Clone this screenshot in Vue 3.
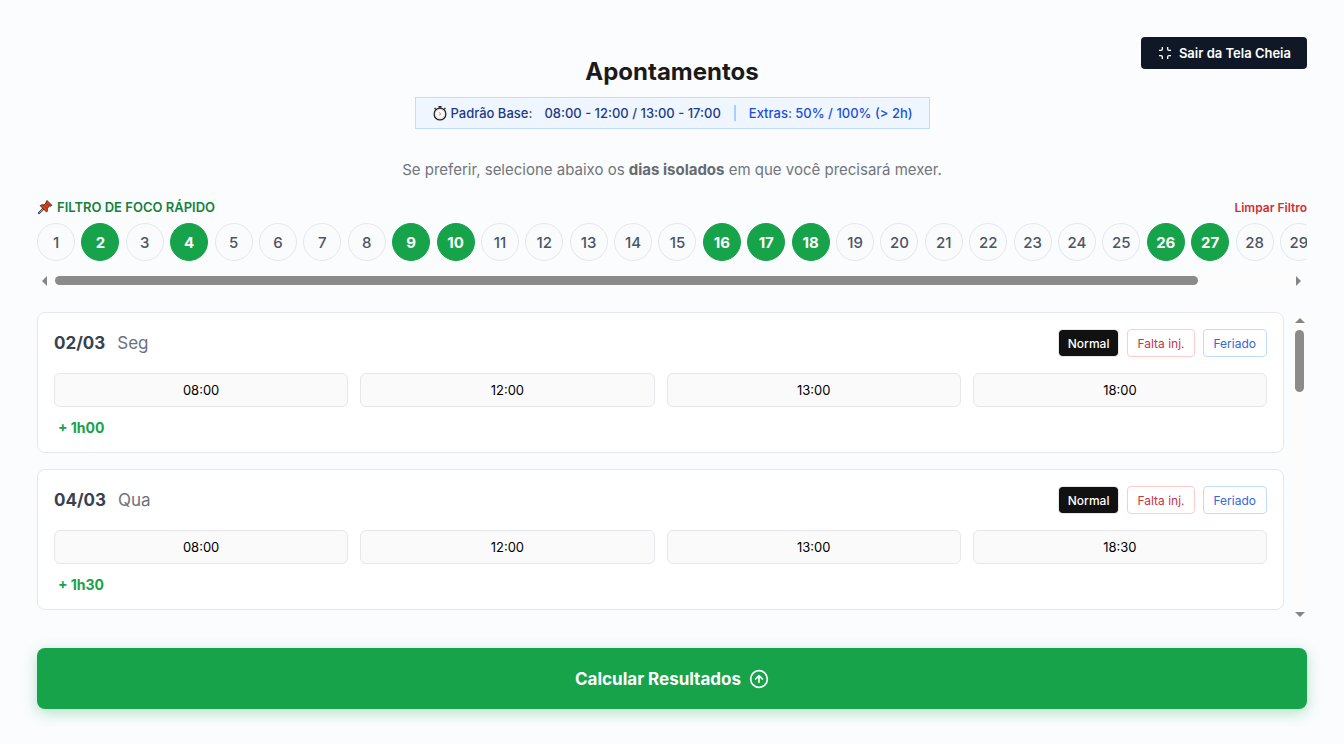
<script setup>
import { ref } from 'vue'

const totalDays = 31
const selected = ref([2, 4, 9, 10, 16, 17, 18, 26, 27])

const toggle = (day) => {
  selected.value = selected.value.includes(day)
    ? selected.value.filter((d) => d !== day)
    : [...selected.value, day]
}

const entries = ref([
  { date: '02/03', weekday: 'Seg', times: ['08:00', '12:00', '13:00', '18:00'], result: '+ 1h00' },
  { date: '04/03', weekday: 'Qua', times: ['08:00', '12:00', '13:00', '18:30'], result: '+ 1h30' },
])

const fieldNames = ['Entrada', 'Saída para almoço', 'Retorno do almoço', 'Saída']
</script>

<template>
  <main class="page">
    <button type="button" class="exit">
      <svg class="exit-icon" viewBox="0 0 24 24" aria-hidden="true">
        <path d="M8 3v3a2 2 0 0 1-2 2H3M21 8h-3a2 2 0 0 1-2-2V3M3 16h3a2 2 0 0 1 2 2v3M16 21v-3a2 2 0 0 1 2-2h3" />
      </svg>
      <span>Sair da Tela Cheia</span>
    </button>

    <header class="header">
      <h1 class="title">Apontamentos</h1>
      <div class="base">
        <span class="base-label">
          <svg class="watch" viewBox="0 0 16 16" aria-hidden="true">
            <path d="M6.4 1.6h3.200M8 1.600v1.800M12.400 3l1 1M3.600 3l-1 1" fill="none" stroke="#222" stroke-width="1.4" />
            <circle cx="8" cy="9" r="5.9" fill="#fafafa" stroke="#222" stroke-width="1.3" />
            <circle cx="8" cy="9" r="4.7" fill="none" stroke="#c9ccd1" stroke-width=".7" />
            <path d="M6.8 7.2L8.9 9 7 10.4" fill="none" stroke="#e06a62" stroke-width=".8" />
          </svg>
          Padrão Base:
        </span>
        <span class="base-hours">08:00 - 12:00 / 13:00 - 17:00</span>
        <span class="divider"></span>
        <span class="base-extras">Extras: 50% / 100% (&gt; 2h)</span>
      </div>
      <p class="hint">Se preferir, selecione abaixo os <strong>dias isolados</strong> em que você precisará mexer.</p>
    </header>

    <section class="filter">
      <div class="filter-head">
        <h2 class="filter-title">
          <svg class="pin" viewBox="0 0 16 16" aria-hidden="true">
            <path d="M6.500 9.500L2 14" stroke="#333" stroke-width="2.2" stroke-linecap="round" />
            <path d="M6 10L2.400 13.600" stroke="#b9c0c6" stroke-width=".9" stroke-linecap="round" />
            <path d="M10 1.500l4.800 4.800-1.400.9-1-.1-2 2.200c.4 1.600.1 2.900-.8 3.800L3.200 6.700c1-.9 2.300-1.200 3.800-.8l2.200-2-.1-1z" fill="#d8421b" stroke="#4a211a" stroke-width=".9" stroke-linejoin="round" />
            <path d="M9.400 4.200l2.600 2.600M6.800 6.300l3 3" stroke="#8f2814" stroke-width=".8" />
          </svg>
          FILTRO DE FOCO RÁPIDO
        </h2>
        <button type="button" class="clear" @click="selected = []">Limpar Filtro</button>
      </div>
      <div class="days-view">
        <div class="days">
          <button
            v-for="day in totalDays"
            :key="day"
            type="button"
            class="day"
            :class="{ active: selected.includes(day) }"
            :aria-pressed="selected.includes(day)"
            @click="toggle(day)"
          >{{ day }}</button>
        </div>
      </div>
      <div class="bar bar-x" aria-hidden="true">
        <span class="arrow left"></span>
        <span class="rail"><span class="thumb"></span></span>
        <span class="arrow right"></span>
      </div>
    </section>

    <section class="entries">
      <div class="list">
        <article v-for="entry in entries" :key="entry.date" class="card">
          <div class="card-head">
            <h3 class="date">{{ entry.date }}<span class="weekday">{{ entry.weekday }}</span></h3>
            <div class="kinds">
              <button type="button" class="kind normal">Normal</button>
              <button type="button" class="kind absence">Falta inj.</button>
              <button type="button" class="kind holiday">Feriado</button>
            </div>
          </div>
          <div class="times">
            <input
              v-for="(time, i) in entry.times"
              :key="i"
              v-model="entry.times[i]"
              type="text"
              class="time"
              :aria-label="fieldNames[i]"
            />
          </div>
          <p class="result">{{ entry.result }}</p>
        </article>
      </div>
      <div class="bar bar-y" aria-hidden="true">
        <span class="arrow up"></span>
        <span class="rail"><span class="thumb"></span></span>
        <span class="arrow down"></span>
      </div>
    </section>

    <button type="button" class="submit">
      <span>Calcular Resultados</span>
      <svg class="submit-icon" viewBox="0 0 24 24" aria-hidden="true">
        <circle cx="12" cy="12" r="10" />
        <path d="M16 12l-4-4-4 4M12 16V8" />
      </svg>
    </button>
  </main>
</template>

<style>
body {
  background: #fafcfe;
}
</style>

<style scoped>
.page,
.page * {
  box-sizing: border-box;
}
.page {
  position: relative;
  display: flex;
  flex-direction: column;
  height: 100vh;
  min-height: 600px;
  padding: 56px 37px 35px;
  font-family: Inter, "Liberation Sans", sans-serif;
}
button,
input {
  font-family: inherit;
  margin: 0;
}
button {
  cursor: pointer;
}
h1, h2, h3, p {
  margin: 0;
}
.exit {
  position: absolute;
  top: 37px;
  right: 37px;
  display: flex;
  align-items: center;
  gap: 6px;
  height: 32px;
  padding: 0 16px;
  border: 0;
  border-radius: 4px;
  background: #101828;
  color: #fff;
  font-size: 13px;
  font-weight: 600;
}
.exit-icon {
  width: 16px;
  height: 16px;
  fill: none;
  stroke: currentColor;
  stroke-width: 2;
}
.header {
  display: flex;
  flex-direction: column;
  align-items: center;
}
.title {
  font-size: 24px;
  line-height: 32px;
  font-weight: 700;
  color: #1a1a1a;
}
.base {
  display: flex;
  align-items: center;
  height: 32px;
  margin-top: 9px;
  padding: 0 16px;
  border: 1px solid #bfdbfe;
  background: #eff6ff;
  font-size: 13px;
  line-height: 16px;
  font-weight: 500;
  color: #1e3a8a;
}
.base-label {
  display: flex;
  align-items: center;
  gap: 3px;
  margin-right: 12px;
}
.watch {
  width: 16px;
  height: 16px;
}
.divider {
  width: 2px;
  height: 16px;
  margin: 0 13px;
  background: #a9cffb;
}
.base-extras {
  color: #1d4ed8;
}
.hint {
  margin-top: 29px;
  font-size: 15px;
  line-height: 24px;
  color: #71757c;
}
.hint strong {
  font-weight: 700;
  color: #666a71;
}
.filter {
  margin-top: 17px;
}
.filter-head {
  display: flex;
  align-items: center;
  justify-content: space-between;
  height: 16px;
}
.filter-title {
  display: flex;
  align-items: center;
  gap: 4px;
  font-size: 13px;
  font-weight: 600;
  color: #15803d;
}
.pin {
  width: 16px;
  height: 16px;
  fill: none;
}
.clear {
  padding: 0;
  border: 0;
  background: none;
  color: #d32f2f;
  font-size: 12px;
  font-weight: 600;
}
.days-view {
  overflow-x: auto;
  scrollbar-width: none;
  margin-top: 8px;
}
.days {
  display: flex;
  justify-content: space-between;
  min-width: 1370px;
}
.day {
  flex: none;
  width: 38px;
  height: 38px;
  padding: 0;
  border: 1px solid #e5e7eb;
  border-radius: 50%;
  background: #fafbfc;
  color: #4b5563;
  font-size: 15px;
  font-weight: 500;
}
.day.active {
  border-color: #16a34a;
  background: #16a34a;
  color: #fff;
  font-weight: 700;
}
.bar {
  display: flex;
  align-items: center;
  background: #fcfcfc;
}
.bar-x {
  height: 15px;
  margin-top: 12px;
  padding: 0 6px 0 5px;
  gap: 8px;
}
.rail {
  display: flex;
  flex: 1;
}
.thumb {
  border-radius: 5px;
  background: #8b8b8b;
}
.bar-x .thumb {
  width: 92.7%;
  height: 9px;
}
.arrow {
  flex: none;
  border: 0 solid transparent;
}
.left {
  border-width: 5px 5px 5px 0;
  border-right-color: #858585;
}
.right {
  border-width: 5px 0 5px 5px;
  border-left-color: #858585;
}
.up {
  border-width: 0 5px 5px;
  border-bottom-color: #858585;
}
.down {
  border-width: 5px 5px 0;
  border-top-color: #858585;
}
.entries {
  display: flex;
  flex: 1;
  gap: 8px;
  min-height: 0;
  margin-top: 24px;
}
.list {
  display: flex;
  flex: 1;
  flex-direction: column;
  gap: 16px;
  overflow-y: auto;
  scrollbar-width: none;
}
.bar-y {
  flex-direction: column;
  width: 15px;
  padding: 6px 0 4px;
  gap: 7px;
}
.bar-y .thumb {
  width: 9px;
  height: 62px;
}
.card {
  flex: none;
  padding: 16px;
  border: 1px solid #e5e7eb;
  border-radius: 8px;
  background: #fff;
}
.card-head {
  display: flex;
  align-items: center;
  justify-content: space-between;
}
.date {
  font-size: 17px;
  line-height: 28px;
  font-weight: 700;
  color: #374151;
}
.weekday {
  margin-left: 12px;
  font-weight: 400;
  color: #6b7280;
}
.kinds {
  display: flex;
  gap: 8px;
}
.kind {
  height: 28px;
  padding: 0 9px;
  border: 1px solid;
  border-radius: 4px;
  background: #fff;
  font-size: 12px;
  font-weight: 400;
}
.normal {
  border-color: #e5e7eb;
  background: #111;
  background-clip: padding-box;
  color: #fff;
  font-weight: 500;
}
.absence {
  border-color: #fecaca;
  color: #c93545;
}
.holiday {
  padding: 0 10px;
  border-color: #bfdbfe;
  color: #3565d8;
}
.times {
  display: grid;
  grid-template-columns: repeat(4, 1fr);
  gap: 12px;
  margin-top: 16px;
}
.time {
  width: 100%;
  min-width: 0;
  height: 34px;
  padding: 0 8px;
  border: 1px solid #e5e7eb;
  border-radius: 6px;
  background: #fafafa;
  color: #000;
  font-size: 13px;
  text-align: center;
}
.result {
  margin: 12px 4px 0;
  font-size: 14px;
  line-height: 17px;
  font-weight: 700;
  color: #16a34a;
}
.submit {
  display: flex;
  flex: none;
  align-items: center;
  justify-content: center;
  gap: 8px;
  height: 61px;
  margin-top: 27px;
  border: 0;
  border-radius: 8px;
  background: #16a34a;
  box-shadow: 0 4px 14px rgba(22, 163, 74, 0.3);
  color: #fff;
  font-size: 17px;
  font-weight: 700;
}
.submit-icon {
  width: 20px;
  height: 20px;
  fill: none;
  stroke: currentColor;
  stroke-width: 2;
  stroke-linecap: round;
  stroke-linejoin: round;
}
</style>
